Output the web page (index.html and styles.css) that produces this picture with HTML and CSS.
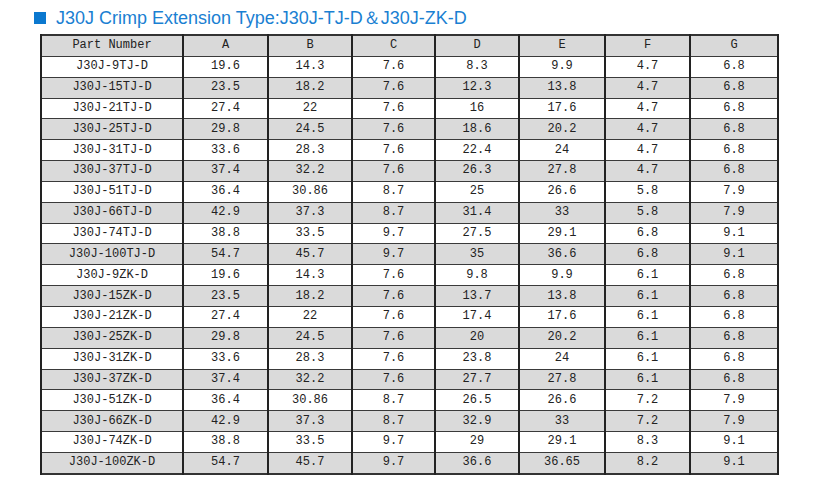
FILE: index.html
```html
<!DOCTYPE html>
<html>
<head>
<meta charset="utf-8">
<link rel="stylesheet" href="styles.css">
</head>
<body>
<div class="page">
  <h1 class="title"><span class="mark"></span><span class="title-text">J30J Crimp Extension Type:J30J-TJ-D＆J30J-ZK-D</span></h1>
  <table class="spec">
    <colgroup>
      <col class="c-part"><col class="c-a"><col class="c-b"><col class="c-c"><col class="c-d"><col class="c-e"><col class="c-f"><col class="c-g">
    </colgroup>
    <thead>
      <tr><th>Part Number</th><th>A</th><th>B</th><th>C</th><th>D</th><th>E</th><th>F</th><th>G</th></tr>
    </thead>
    <tbody>
      <tr><td>J30J-9TJ-D</td><td>19.6</td><td>14.3</td><td>7.6</td><td>8.3</td><td>9.9</td><td>4.7</td><td>6.8</td></tr>
      <tr><td>J30J-15TJ-D</td><td>23.5</td><td>18.2</td><td>7.6</td><td>12.3</td><td>13.8</td><td>4.7</td><td>6.8</td></tr>
      <tr><td>J30J-21TJ-D</td><td>27.4</td><td>22</td><td>7.6</td><td>16</td><td>17.6</td><td>4.7</td><td>6.8</td></tr>
      <tr><td>J30J-25TJ-D</td><td>29.8</td><td>24.5</td><td>7.6</td><td>18.6</td><td>20.2</td><td>4.7</td><td>6.8</td></tr>
      <tr><td>J30J-31TJ-D</td><td>33.6</td><td>28.3</td><td>7.6</td><td>22.4</td><td>24</td><td>4.7</td><td>6.8</td></tr>
      <tr><td>J30J-37TJ-D</td><td>37.4</td><td>32.2</td><td>7.6</td><td>26.3</td><td>27.8</td><td>4.7</td><td>6.8</td></tr>
      <tr><td>J30J-51TJ-D</td><td>36.4</td><td>30.86</td><td>8.7</td><td>25</td><td>26.6</td><td>5.8</td><td>7.9</td></tr>
      <tr><td>J30J-66TJ-D</td><td>42.9</td><td>37.3</td><td>8.7</td><td>31.4</td><td>33</td><td>5.8</td><td>7.9</td></tr>
      <tr><td>J30J-74TJ-D</td><td>38.8</td><td>33.5</td><td>9.7</td><td>27.5</td><td>29.1</td><td>6.8</td><td>9.1</td></tr>
      <tr><td>J30J-100TJ-D</td><td>54.7</td><td>45.7</td><td>9.7</td><td>35</td><td>36.6</td><td>6.8</td><td>9.1</td></tr>
      <tr><td>J30J-9ZK-D</td><td>19.6</td><td>14.3</td><td>7.6</td><td>9.8</td><td>9.9</td><td>6.1</td><td>6.8</td></tr>
      <tr><td>J30J-15ZK-D</td><td>23.5</td><td>18.2</td><td>7.6</td><td>13.7</td><td>13.8</td><td>6.1</td><td>6.8</td></tr>
      <tr><td>J30J-21ZK-D</td><td>27.4</td><td>22</td><td>7.6</td><td>17.4</td><td>17.6</td><td>6.1</td><td>6.8</td></tr>
      <tr><td>J30J-25ZK-D</td><td>29.8</td><td>24.5</td><td>7.6</td><td>20</td><td>20.2</td><td>6.1</td><td>6.8</td></tr>
      <tr><td>J30J-31ZK-D</td><td>33.6</td><td>28.3</td><td>7.6</td><td>23.8</td><td>24</td><td>6.1</td><td>6.8</td></tr>
      <tr><td>J30J-37ZK-D</td><td>37.4</td><td>32.2</td><td>7.6</td><td>27.7</td><td>27.8</td><td>6.1</td><td>6.8</td></tr>
      <tr><td>J30J-51ZK-D</td><td>36.4</td><td>30.86</td><td>8.7</td><td>26.5</td><td>26.6</td><td>7.2</td><td>7.9</td></tr>
      <tr><td>J30J-66ZK-D</td><td>42.9</td><td>37.3</td><td>8.7</td><td>32.9</td><td>33</td><td>7.2</td><td>7.9</td></tr>
      <tr><td>J30J-74ZK-D</td><td>38.8</td><td>33.5</td><td>9.7</td><td>29</td><td>29.1</td><td>8.3</td><td>9.1</td></tr>
      <tr><td>J30J-100ZK-D</td><td>54.7</td><td>45.7</td><td>9.7</td><td>36.6</td><td>36.65</td><td>8.2</td><td>9.1</td></tr>
    </tbody>
  </table>
</div>
</body>
</html>
```

FILE: styles.css
```css
html, body {
  margin: 0;
  padding: 0;
  background: #ffffff;
}

.page {
  width: 822px;
  height: 493px;
  padding-top: 8px;
  box-sizing: border-box;
}

.title {
  display: flex;
  align-items: center;
  gap: 10px;
  margin: 0 0 6px 34px;
  height: 20px;
  font-family: "Liberation Sans", Arial, sans-serif;
  font-weight: normal;
  font-size: 18px;
  color: #1a80d2;
  white-space: nowrap;
}

.mark {
  display: block;
  width: 12px;
  height: 12px;
  background: #0b78cf;
  flex: none;
}

.spec {
  margin-left: 40px;
  border-collapse: collapse;
  table-layout: fixed;
  width: 737px;
  font-family: "Liberation Mono", "Courier New", monospace;
  font-size: 12px;
  color: #222;
  border: 2px solid #333;
}

.c-part { width: 142px; }
.c-a { width: 85px; }
.c-b { width: 84px; }
.c-c { width: 83px; }
.c-d { width: 84px; }
.c-e { width: 86px; }
.c-f { width: 85px; }
.c-g { width: 88px; }

.spec th,
.spec td {
  height: 19.85px;
  padding: 0;
  text-align: center;
  font-weight: normal;
  border-top: 1px solid #3a3a3a;
  border-bottom: 1px solid #3a3a3a;
  border-left: 2px solid #222;
  border-right: 2px solid #222;
  line-height: 19px;
}

.spec thead th {
  background: #d9d9d9;
}

.spec tbody tr:nth-child(even) td {
  background: #dadada;
}

.spec tbody tr:nth-child(odd) td {
  background: #ffffff;
}
```
